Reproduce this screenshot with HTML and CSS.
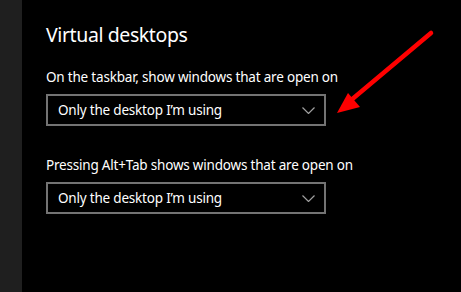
FILE: index.html
```html
<!DOCTYPE html>
<html lang="en">

<head>
  <meta charset="utf-8">
  <title>Virtual desktops</title>
  <link rel="stylesheet" href="styles.css">
</head>

<body>
  <div class="page">
    <div class="sidebar"></div>
    <div class="content">
      <h2 class="title">Virtual desktops</h2>
      <p class="label">On the taskbar, show windows that are open on</p>
      <div class="select">
        <span>Only the desktop I’m using</span>
        <svg class="chevron" width="13" height="7" viewBox="0 0 13 7">
          <path d="M0.5 0.5 L6.5 6.5 L12.5 0.5" fill="none" stroke="#a0a0a0" stroke-width="1.2" />
        </svg>
      </div>
      <p class="label label-second">Pressing Alt+Tab shows windows that are open on</p>
      <div class="select">
        <span>Only the desktop I’m using</span>
        <svg class="chevron" width="13" height="7" viewBox="0 0 13 7">
          <path d="M0.5 0.5 L6.5 6.5 L12.5 0.5" fill="none" stroke="#a0a0a0" stroke-width="1.2" />
        </svg>
      </div>
    </div>
    <svg class="arrow" width="461" height="292" viewBox="0 0 461 292">
      <line x1="431" y1="33" x2="350" y2="101" stroke="#ff0000" stroke-width="4.5" stroke-linecap="round" />
      <polygon points="337,113 348,93 360,107" fill="#ff0000" />
    </svg>
  </div>
</body>

</html>
```

FILE: styles.css
```css
* {
  box-sizing: border-box;
}

body {
  margin: 0;
  background: #000000;
  font-family: "Noto Sans", "Open Sans", sans-serif;
  color: #ffffff;
}

.page {
  position: relative;
  display: flex;
  height: 292px;
  overflow: hidden;
}

.sidebar {
  width: 22px;
  flex-shrink: 0;
  background: #1f1f1f;
}

.content {
  padding-left: 24px;
  padding-top: 21px;
}

.title {
  margin: 0;
  font-size: 19.5px;
  font-weight: 400;
  letter-spacing: -0.4px;
  line-height: 28px;
}

.label {
  margin: 0;
  margin-top: 18px;
  font-size: 13.5px;
  letter-spacing: -0.2px;
  line-height: 20px;
}

.label-second {
  margin-top: 29px;
}

.select {
  display: flex;
  align-items: center;
  justify-content: space-between;
  width: 280px;
  height: 32px;
  margin-top: 7px;
  padding: 0 9px 0 10px;
  border: 2px solid #737373;
  font-size: 13.5px;
  letter-spacing: -0.2px;
}

.chevron {
  display: block;
}

.arrow {
  position: absolute;
  top: 0;
  left: 0;
  pointer-events: none;
}
```
